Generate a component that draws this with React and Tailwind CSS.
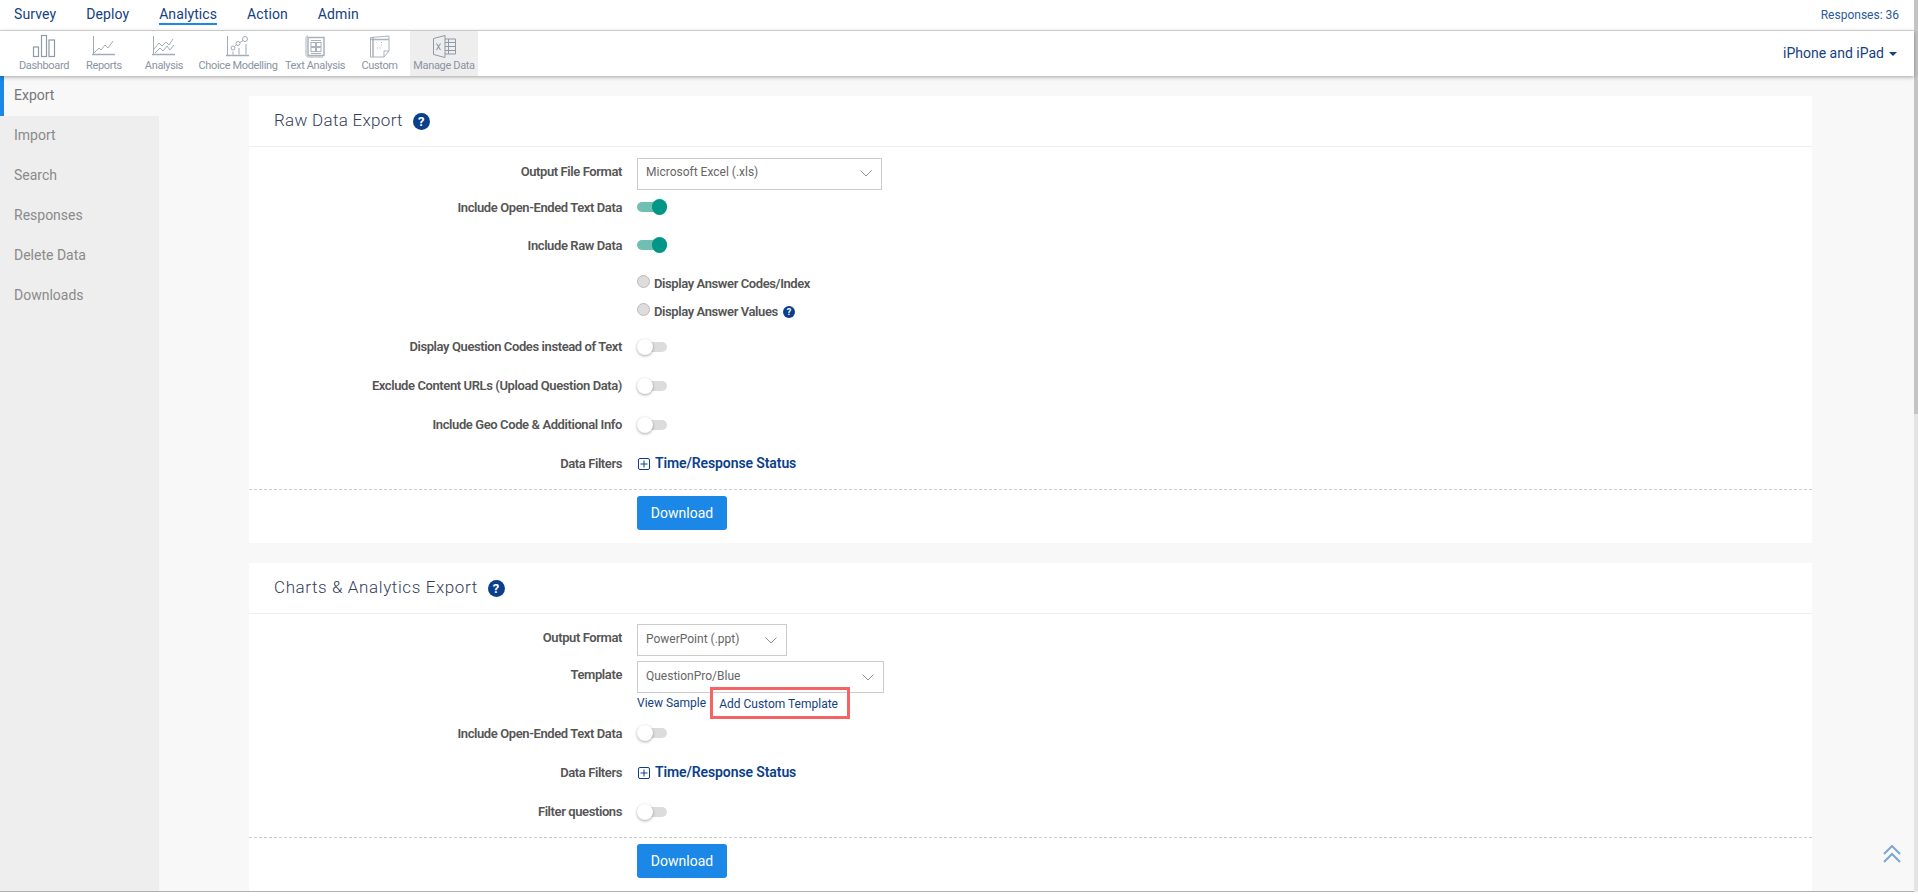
const navs = ['Survey', 'Deploy', 'Analytics', 'Action', 'Admin'];

function IconDashboard() {
  return (
    <svg width="24" height="24" viewBox="0 0 24 24" fill="none" stroke="#8f99a7" strokeWidth="1.2">
      <rect x="1.5" y="13" width="5" height="9.5" />
      <rect x="9.5" y="1.5" width="5" height="21" />
      <rect x="17" y="6" width="5.5" height="16.5" />
    </svg>
  );
}
function IconReports() {
  return (
    <svg width="24" height="20" viewBox="0 0 24 20" fill="none" stroke="#a3abb7" strokeWidth="1">
      <path d="M1.5 0v19" />
      <path d="M0 18.5h23" strokeWidth="1.5" />
      <path d="M2 17l5-5 2 2 4-5 3 3 5-7" />
    </svg>
  );
}
function IconAnalysis() {
  return (
    <svg width="24" height="20" viewBox="0 0 24 20" fill="none" stroke="#a3abb7" strokeWidth="1">
      <path d="M1.5 0v19" />
      <path d="M0 18.5h23" strokeWidth="1.5" />
      <path d="M2 13l5-6 3 3 4-4 3 3 4-6" />
      <path d="M3 17l5-5 3 3 4-5 3 4 4-5" />
    </svg>
  );
}
function IconChoice() {
  return (
    <svg width="24" height="21" viewBox="0 0 24 21" fill="none" stroke="#a3abb7" strokeWidth="1">
      <path d="M1.5 0v20" />
      <path d="M0 19.5h23" strokeWidth="1.5" />
      <circle cx="7" cy="12" r="2" />
      <circle cx="12" cy="7.5" r="2" />
      <circle cx="19" cy="3" r="2.5" />
      <path d="M8.5 10.5l2-2M14 6.5l3-2" />
      <path d="M7 15.5v3M13 12v6.5M20 8v10.5" />
    </svg>
  );
}
function IconText() {
  return (
    <svg width="20" height="23" viewBox="0 0 20 23" fill="none" stroke="#aab2bd" strokeWidth="1">
      <path d="M3 2.5h16v18H3z" strokeWidth="1.5" />
      <path d="M3 1C1.5 1 1 2 1 3.5v16C1 21 2 22 3.5 22H18" />
      <path d="M6 5.5h10" />
      <rect x="6" y="7.5" width="4.5" height="4" />
      <rect x="11.5" y="7.5" width="4.5" height="4" />
      <rect x="6" y="12.5" width="4.5" height="4" />
      <rect x="11.5" y="12.5" width="4.5" height="4" />
      <path d="M6 18.5h10" />
    </svg>
  );
}
function IconCustom() {
  return (
    <svg width="21" height="23" viewBox="0 0 21 23" fill="none" stroke="#aab2bd" strokeWidth="1">
      <path d="M1.5 2.5L20 1v15l-5 6H1.5z" />
      <path d="M1.5 4.5h18.5M4 2v20" strokeWidth="1.5" />
      <path d="M20 16h-5v6" />
      <path d="M8 13h5M12.500 7v5" strokeDasharray="1 1.5" />
    </svg>
  );
}
function IconExcel() {
  return (
    <svg width="23" height="23" viewBox="0 0 23 23" fill="none" stroke="#8f99a7" strokeWidth="1">
      <path d="M0.5 3.500L12 0.500v22L0.500 19.500z" />
      <path d="M12 4h10.500v15H12" />
      <path d="M15.500 4v15M12 7.500h10.500M12 11.500h10.500M12 15.500h10.500" />
      <path d="M3.500 8.500l4 6.500M7.500 8.500l-4 6.500" strokeWidth="1.1" />
    </svg>
  );
}

const subs = [
  { label: 'Dashboard', icon: <IconDashboard />, cls: 'w-[68px]' },
  { label: 'Reports', icon: <IconReports />, cls: 'w-[52px]' },
  { label: 'Analysis', icon: <IconAnalysis />, cls: 'w-[68px]' },
  { label: 'Choice Modelling', icon: <IconChoice />, cls: 'w-[80px]' },
  { label: 'Text Analysis', icon: <IconText />, cls: 'w-[74px]' },
  { label: 'Custom', icon: <IconCustom />, cls: 'w-[58px] pr-[3px]' },
  { label: 'Manage Data', icon: <IconExcel />, cls: 'w-[68px] bg-[#eeeeee]' },
];

function Help({ size = 'w-[17px] h-[17px] text-[13px]' }) {
  return (
    <span className={`${size} inline-flex items-center justify-center rounded-full bg-[#0b3f8c] text-white font-bold leading-none`}>?</span>
  );
}

function Toggle({ on }) {
  return (
    <span className="relative block w-[30px] h-[16px]">
      <span className={`absolute right-0 top-[3px] h-[10px] rounded-full ${on ? 'left-0 bg-[#6fbfb2]' : 'left-[3px] bg-[#dcdcdc]'}`} />
      <span className={on
        ? 'absolute right-0 top-0 w-[15px] h-[16px] rounded-full bg-[#009688]'
        : 'absolute left-0 top-0 w-[16px] h-[16px] rounded-full bg-white shadow-[0_1px_3px_rgba(0,0,0,0.35)]'} />
    </span>
  );
}

function Row({ label, h = 'h-[39px]', up, children }) {
  return (
    <div className={`flex items-center ${h}`}>
      <div className={`w-[373px] text-right text-[13px] font-semibold text-[#555555] whitespace-nowrap tracking-[-0.4px] ${up ? 'pb-[4px]' : 'pt-[1px]'}`}>{label}</div>
      <div className="ml-[15px] flex items-center">{children}</div>
    </div>
  );
}

function Select({ text, w, h = 'h-[32px]' }) {
  return (
    <div className={`${w} ${h} flex items-center justify-between border border-[#cccccc] pl-[8px] pr-[9px] text-[12px] text-[#666666]`}>
      <span className="pb-[3px]">{text}</span>
      <svg width="12" height="7" viewBox="0 0 12 7" fill="none" stroke="#8a94a3" strokeWidth="1"><path d="M0.5 0.5L6 6l5.5-5.5" /></svg>
    </div>
  );
}

function Filters() {
  return (
    <div className="flex items-center text-[14px] font-semibold text-[#0b3f8c] tracking-[-0.1px]">
      <svg width="12" height="12" viewBox="0 0 12 12" fill="none" stroke="#0b3f8c" strokeWidth="1" className="ml-[1px]">
        <rect x="0.5" y="0.5" width="11" height="11" rx="1.5" />
        <path d="M6 2.5v7M2.5 6h7" />
      </svg>
      <span className="ml-[5px]">Time/Response Status</span>
    </div>
  );
}

function Footer() {
  return (
    <div className="border-t border-dashed border-[#cccccc] pl-[388px] pt-[6px]">
      <button className="w-[90px] h-[34px] rounded-[3px] bg-[#1b87e6] text-white text-[14px]">Download</button>
    </div>
  );
}

function Title({ children, tracking }) {
  return (
    <div className={`h-[51px] border-b border-[#eeeeee] pl-[25px] flex items-center text-[17px] font-light text-[#33405a] ${tracking}`}>
      <span>{children}</span>
      <span className="ml-[10px] flex"><Help /></span>
    </div>
  );
}

function Radio({ children }) {
  return (
    <div className="h-[28px] pl-[388px] flex items-center gap-[4px] text-[13px] font-semibold text-[#555555] tracking-[-0.4px]">
      <span className="w-[13px] h-[13px] -mt-[3px] rounded-full border border-[#bbbbbb] bg-[#dddddd]" />
      <span className="pt-[2px] flex items-center">{children}</span>
    </div>
  );
}

export default function App() {
  return (
    <div className="w-[1918px] h-[896px] overflow-hidden bg-white flex" style={{ fontFamily: 'Roboto, "Liberation Sans", sans-serif' }}>
      <div className="w-[1914px] flex flex-col">
        <div className="h-[31px] shrink-0 border-b border-[#dddddd] flex items-center justify-between pl-[14px] pr-[15px]">
          <div className="flex gap-[30px] text-[14px] text-[#14417f] tracking-[0.1px]">
            {navs.map((n) => (
              <span key={n} className={n === 'Analytics' ? 'border-b-2 border-[#1b87e6] leading-[18px] h-[20px]' : 'leading-[18px] h-[20px]'}>{n}</span>
            ))}
          </div>
          <span className="text-[12px] text-[#2a5a9a]">Responses: 36</span>
        </div>
        <div className="h-[45px] shrink-0 relative z-10 bg-white shadow-[0_1px_4px_rgba(0,0,0,0.35)] flex items-stretch justify-between pr-[17px]">
          <div className="flex ml-[10px]">
            {subs.map((s) => (
              <div key={s.label} className={`${s.cls} flex flex-col items-center pt-[3px] text-[11px] text-[#8a94a3] whitespace-nowrap tracking-[-0.35px]`}>
                <div className="h-[24px] flex items-center">{s.icon}</div>
                <span className="leading-[14px] pt-[1px]">{s.label}</span>
              </div>
            ))}
          </div>
          <div className="flex items-center text-[14px] text-[#14417f]">
            iPhone and iPad
            <svg width="8" height="4" viewBox="0 0 8 4" className="ml-[5px]"><path d="M0 0h8L4 4z" fill="#14417f" /></svg>
          </div>
        </div>
        <div className="h-[816px] shrink-0 flex border-b border-[#b0b0b0] overflow-hidden">
          <div className="w-[159px] shrink-0 bg-[#eeeeee] text-[14px] text-[#8a8a8a]">
            <div className="h-[40px] bg-[#f8f8f8] border-l-4 border-[#1b87e6] pl-[10px] pb-[2px] flex items-center text-[#777777]">Export</div>
            {['Import', 'Search', 'Responses', 'Delete Data', 'Downloads'].map((x) => (
              <div key={x} className="h-[40px] pl-[14px] pb-[2px] flex items-center">{x}</div>
            ))}
          </div>
          <div className="flex-1 bg-[#f8f8f8] relative">
            <div className="ml-[90px] w-[1563px] pt-[20px] flex flex-col gap-[20px]">
              <div className="bg-white h-[447px]">
                <Title tracking="tracking-[0.3px]">Raw Data Export</Title>
                <div className="pt-[10px] flex flex-col">
                  <Row label="Output File Format" h="h-[33px]" up><Select text="Microsoft Excel (.xls)" w="w-[245px]" /></Row>
                  <Row label="Include Open-Ended Text Data" h="h-[34px]"><Toggle on /></Row>
                  <Row label="Include Raw Data" h="h-[42px]"><Toggle on /></Row>
                  <div className="mt-[3px]"><Radio>Display Answer Codes/Index</Radio></div>
                  <Radio>
                    Display Answer Values
                    <span className="ml-[5px] flex"><Help size="w-[12px] h-[12px] text-[9px]" /></span>
                  </Radio>
                  <Row label="Display Question Codes instead of Text" h="h-[39px] mt-[2px]"><Toggle /></Row>
                  <Row label="Exclude Content URLs (Upload Question Data)"><Toggle /></Row>
                  <Row label="Include Geo Code & Additional Info"><Toggle /></Row>
                  <Row label="Data Filters"><Filters /></Row>
                  <div className="mt-[6px]"><Footer /></div>
                </div>
              </div>
              <div className="bg-white h-[400px]">
                <Title tracking="tracking-[0.6px]">Charts & Analytics Export</Title>
                <div className="pt-[10px] flex flex-col">
                  <Row label="Output Format" h="h-[32px]" up><Select text="PowerPoint (.ppt)" w="w-[150px]" /></Row>
                  <Row label="Template" h="h-[32px] mt-[5px]" up><Select text="QuestionPro/Blue" w="w-[247px]" /></Row>
                  <div className="h-[26px] pl-[388px] flex items-end text-[12px] text-[#14417f] relative z-10">
                    <span className="pb-[7px]">View Sample</span>
                    <span className="ml-[4px] h-[32px] w-[140px] border-[3px] border-[#f46464] flex items-center pl-[6px] pt-[2px]">Add Custom Template</span>
                  </div>
                  <Row label="Include Open-Ended Text Data" h="h-[28px]"><Toggle /></Row>
                  <Row label="Data Filters" h="h-[39px] mt-[6px]"><Filters /></Row>
                  <Row label="Filter questions"><Toggle /></Row>
                  <div className="mt-[6px]"><Footer /></div>
                </div>
              </div>
            </div>
            <svg width="18" height="18" viewBox="0 0 18 18" fill="none" stroke="#7ba7d0" strokeWidth="2" className="absolute left-[1724px] top-[769px]">
              <path d="M1 9l8-8 8 8M1 17l8-8 8 8" />
            </svg>
          </div>
        </div>
      </div>
      <div className="w-[4px] bg-[#e4e4e4] h-[892px]">
        <div className="h-[414px] bg-[#c4c4c4]" />
      </div>
    </div>
  );
}
